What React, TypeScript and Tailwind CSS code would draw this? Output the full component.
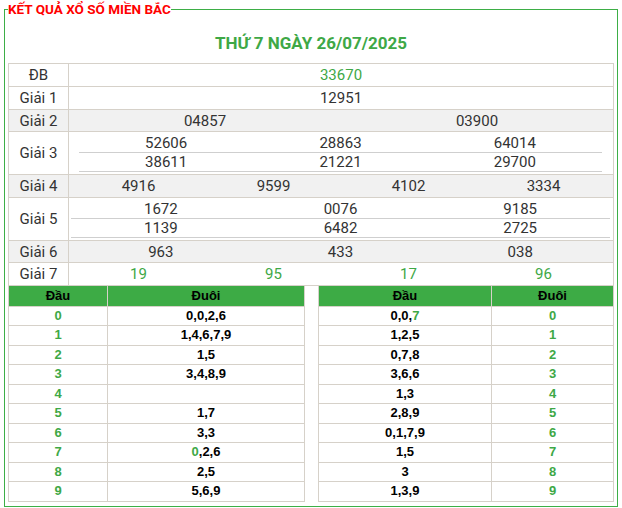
import React from "react";

const B = "border border-[#d6d1c9] p-0";
const G = "text-[#3ea846]";

function Cols({ vals, cls = "", green = false }: { vals: string[]; cls?: string; green?: boolean }) {
  return (
    <div className={`flex ${cls}`}>
      {vals.map((v, i) => (
        <div key={i} className={`flex-1 text-center ${green ? G : ""}`}>
          {v}
        </div>
      ))}
    </div>
  );
}

function SubRows({ rows, cls }: { rows: string[][]; cls: string }) {
  return (
    <div className={`${cls} pt-[1px] pb-[2px]`}>
      {rows.map((r, i) => (
        <div key={i} className={`flex ${i === 0 ? "h-[20px]" : "h-[19px]"} items-center border-b border-[#cfcfcf]`}>
          {r.map((v, j) => (
            <div key={j} className="flex-1 text-center">
              {v}
            </div>
          ))}
        </div>
      ))}
    </div>
  );
}

const leftRows: [string, React.ReactNode][] = [
  ["0", "0,0,2,6"],
  ["1", "1,4,6,7,9"],
  ["2", "1,5"],
  ["3", "3,4,8,9"],
  ["4", ""],
  ["5", "1,7"],
  ["6", "3,3"],
  ["7", (<><span className={G}>0</span>,2,6</>)],
  ["8", "2,5"],
  ["9", "5,6,9"],
];

const rightRows: [React.ReactNode, string][] = [
  [(<>0,0,<span className={G}>7</span></>), "0"],
  ["1,2,5", "1"],
  ["0,7,8", "2"],
  ["3,6,6", "3"],
  ["1,3", "4"],
  ["2,8,9", "5"],
  ["0,1,7,9", "6"],
  ["1,5", "7"],
  ["3", "8"],
  ["1,3,9", "9"],
];

export default function App() {
  return (
    <div className="w-[622px] h-[508px] bg-white pt-[1px]" style={{ fontFamily: "Roboto, 'Liberation Sans', sans-serif" }}>
      <fieldset className="mx-[4px] border border-[#3dae46] px-[3px] pb-[4px]">
        <legend className="h-[17px] text-[13.5px] font-bold leading-[17px] text-[#ff0000]">
          KẾT QUẢ XỔ SỐ MIỀN BẮC
        </legend>
        <div className="mt-[13px] mb-[8px] h-[24px] text-center text-[17px] font-bold leading-[24px] text-[#3ea846]">
          THỨ 7 NGÀY 26/07/2025
        </div>
        <table className="w-full border-collapse text-[15px] leading-[18px] text-[#333]">
          <tbody>
            <tr className="h-[23px]">
              <td className={`${B} w-[60px] text-center`}>ĐB</td>
              <td className={`${B} text-center ${G}`}>33670</td>
            </tr>
            <tr className="h-[23px]">
              <td className={`${B} text-center`}>Giải 1</td>
              <td className={`${B} text-center`}>12951</td>
            </tr>
            <tr className="h-[22px] bg-[#f1f1f1]">
              <td className={`${B} text-center`}>Giải 2</td>
              <td className={B}>
                <Cols vals={["04857", "03900"]} />
              </td>
            </tr>
            <tr className="h-[43px]">
              <td className={`${B} text-center`}>Giải 3</td>
              <td className={B}>
                <SubRows
                  cls="ml-[10px] mr-[11px]"
                  rows={[
                    ["52606", "28863", "64014"],
                    ["38611", "21221", "29700"],
                  ]}
                />
              </td>
            </tr>
            <tr className="h-[23px] bg-[#f1f1f1]">
              <td className={`${B} text-center`}>Giải 4</td>
              <td className={B}>
                <Cols cls="ml-[2px] mr-[2px]" vals={["4916", "9599", "4102", "3334"]} />
              </td>
            </tr>
            <tr className="h-[43px]">
              <td className={`${B} text-center`}>Giải 5</td>
              <td className={B}>
                <SubRows
                  cls="ml-[2px] mr-[3px]"
                  rows={[
                    ["1672", "0076", "9185"],
                    ["1139", "6482", "2725"],
                  ]}
                />
              </td>
            </tr>
            <tr className="h-[22px] bg-[#f1f1f1]">
              <td className={`${B} text-center`}>Giải 6</td>
              <td className={B}>
                <Cols cls="ml-[2px] mr-[3px]" vals={["963", "433", "038"]} />
              </td>
            </tr>
            <tr className="h-[23px]">
              <td className={`${B} text-center`}>Giải 7</td>
              <td className={B}>
                <Cols cls="ml-[2px] mr-[2px]" green vals={["19", "95", "17", "96"]} />
              </td>
            </tr>
          </tbody>
        </table>
        <div
          className="flex justify-between text-[13px] font-bold leading-[16px] text-black"
          style={{ fontFamily: "'Liberation Sans', Arial, sans-serif" }}
        >
          <table className="w-[297px] border-collapse">
            <tbody>
              <tr className="h-[20px] bg-[#3dab45]">
                <td className="w-[99px] border-x border-b border-[#d6d1c9] p-0 text-center">Đầu</td>
                <td className="border-x border-b border-[#d6d1c9] p-0 text-center">Đuôi</td>
              </tr>
              {leftRows.map(([d, t], i) => (
                <tr key={i} className="h-[19.5px]">
                  <td className={`border border-[#d6d1c9] p-0 text-center ${G}`}>{d}</td>
                  <td className="border border-[#d6d1c9] p-0 text-center">{t}</td>
                </tr>
              ))}
            </tbody>
          </table>
          <table className="w-[296px] border-collapse">
            <tbody>
              <tr className="h-[20px] bg-[#3dab45]">
                <td className="w-[173px] border-x border-b border-[#d6d1c9] p-0 text-center">Đầu</td>
                <td className="border-x border-b border-[#d6d1c9] p-0 text-center">Đuôi</td>
              </tr>
              {rightRows.map(([t, d], i) => (
                <tr key={i} className="h-[19.5px]">
                  <td className="border border-[#d6d1c9] p-0 text-center">{t}</td>
                  <td className={`border border-[#d6d1c9] p-0 text-center ${G}`}>{d}</td>
                </tr>
              ))}
            </tbody>
          </table>
        </div>
      </fieldset>
    </div>
  );
}
